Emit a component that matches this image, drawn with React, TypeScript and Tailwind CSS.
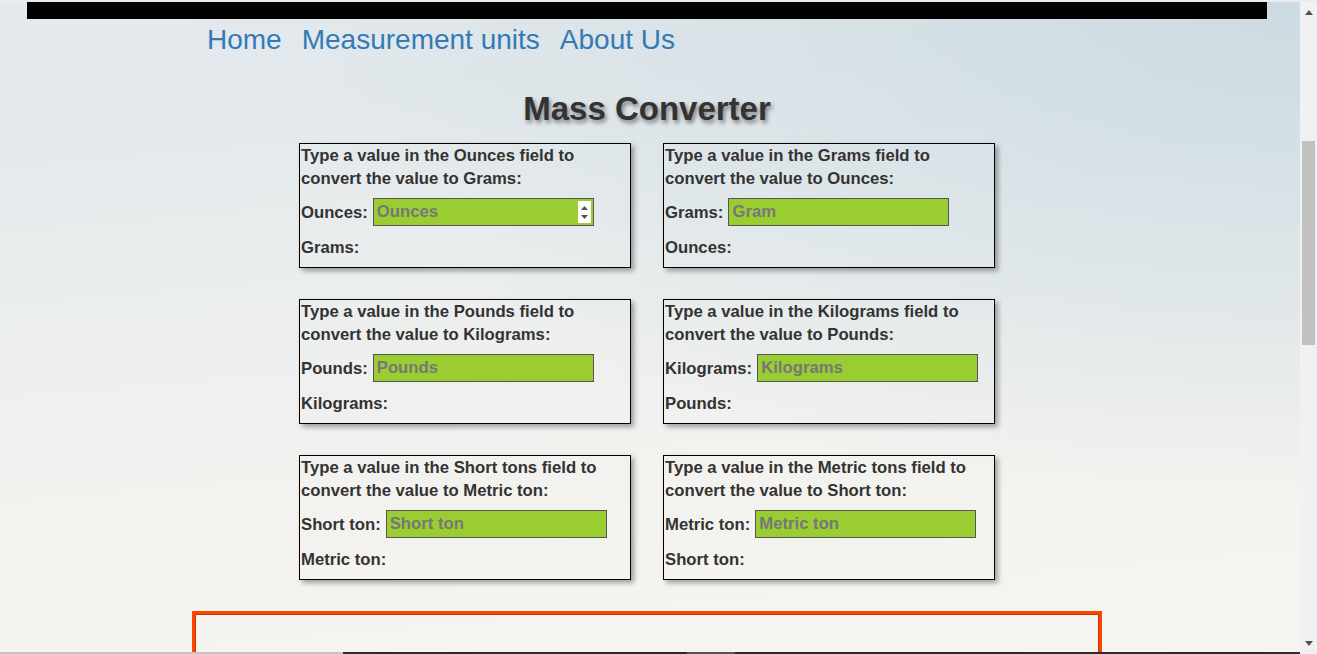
const cards = [
  { from: "Ounces", to: "Grams", label: "Ounces:", result: "Grams:", ph: "Ounces", spin: true },
  { from: "Grams", to: "Ounces", label: "Grams:", result: "Ounces:", ph: "Gram" },
  { from: "Pounds", to: "Kilograms", label: "Pounds:", result: "Kilograms:", ph: "Pounds" },
  { from: "Kilograms", to: "Pounds", label: "Kilograms:", result: "Pounds:", ph: "Kilograms" },
  { from: "Short tons", to: "Metric ton", label: "Short ton:", result: "Metric ton:", ph: "Short ton" },
  { from: "Metric tons", to: "Short ton", label: "Metric ton:", result: "Short ton:", ph: "Metric ton" },
];

const ConverterCard = ({ card }: { card: (typeof cards)[number] }) => (
  <div className="w-[332px] h-[125px] border border-black px-[1px] text-[16.7px] font-bold text-[#333] shadow-[3px_3px_5px_rgba(0,0,0,0.35)]">
    <p className="leading-[23px]">
      Type a value in the {card.from} field to convert the value to {card.to}:
    </p>
    <div className="mt-[8px] flex items-center gap-[5px] h-[28px]">
      <label className="leading-[23px] whitespace-nowrap">{card.label}</label>
      <div className="relative">
        <input
          type="text"
          placeholder={card.ph}
          className="w-[221px] h-[28px] bg-[#9acd32] border border-[#555] px-[3px] font-bold text-[16.7px] placeholder:text-[#777] outline-none"
        />
        {card.spin && (
          <div className="absolute right-[3px] top-[3px] w-[13px] h-[22px] bg-white flex flex-col items-center justify-center gap-[5px]">
            <svg width="7" height="4" viewBox="0 0 7 4">
              <path d="M3.5 0L7 4H0z" fill="#555" />
            </svg>
            <svg width="7" height="4" viewBox="0 0 7 4">
              <path d="M0 0h7L3.5 4z" fill="#555" />
            </svg>
          </div>
        )}
      </div>
    </div>
    <p className="mt-[10px] leading-[23px]">{card.result}</p>
  </div>
);

export default function App() {
  return (
    <div className="relative w-[1317px] h-[654px] overflow-hidden flex border-t-2 border-[#ececec] font-['Liberation_Sans',Arial,sans-serif]">
      {/* page */}
      <div className="w-[1300px] h-full pr-[6px] bg-[radial-gradient(ellipse_at_top_right,#cddbe2_0%,transparent_55%),linear-gradient(175deg,#e3e9ec_0%,#e2e8eb_15%,#ebeeee_40%,#f3f2ef_70%,#f7f5f1_100%)]">
        <div className="mx-[27px] h-[17px] bg-black" />

        <div className="w-[910px] mx-auto px-[15px]">
          <nav className="pt-[5px] flex gap-5 text-[28px] leading-[32px] text-[#337ab7]">
            <a href="#">Home</a>
            <a href="#">Measurement units</a>
            <a href="#">About Us</a>
          </nav>
        </div>

        <h1 className="mt-[34px] text-center text-[33px] leading-[38px] font-bold text-[#333] [text-shadow:2px_3px_4px_rgba(0,0,0,0.45)]">
          Mass Converter
        </h1>

        <div className="mt-[15px] mx-auto w-[696px] grid grid-cols-2 gap-x-[32px] gap-y-[31px]">
          {cards.map((card, index) => (
            <ConverterCard key={index} card={card} />
          ))}
        </div>

        <div className="mt-[31px] mx-auto w-[910px] h-[200px] border-[3px] border-[#ff4500] shadow-[inset_0_0_0_1px_#c23800]" />
      </div>

      {/* scrollbar */}
      <div className="w-[17px] h-full bg-[#f1f1f1] flex flex-col items-center">
        <svg className="mt-[8px] shrink-0" width="8" height="5" viewBox="0 0 8 5">
          <path d="M4 0L8 5H0z" fill="#505050" />
        </svg>
        <div className="mt-[126px] w-[13px] h-[204px] shrink-0 bg-[#c1c1c1]" />
        <div className="flex-1" />
        <svg className="mb-[8px] shrink-0" width="8" height="5" viewBox="0 0 8 5">
          <path d="M0 0h8L4 5z" fill="#505050" />
        </svg>
      </div>

      {/* bottom edge strip */}
      <div className="absolute left-0 bottom-0 w-[1300px] h-[2px] flex">
        <div className="w-[343px] bg-[#c4c4c4]" />
        <div className="w-[344px] bg-[#2b2b2b]" />
        <div className="w-[48px] bg-[#555]" />
        <div className="flex-1 bg-[#2b2b2b]" />
      </div>
    </div>
  );
}
